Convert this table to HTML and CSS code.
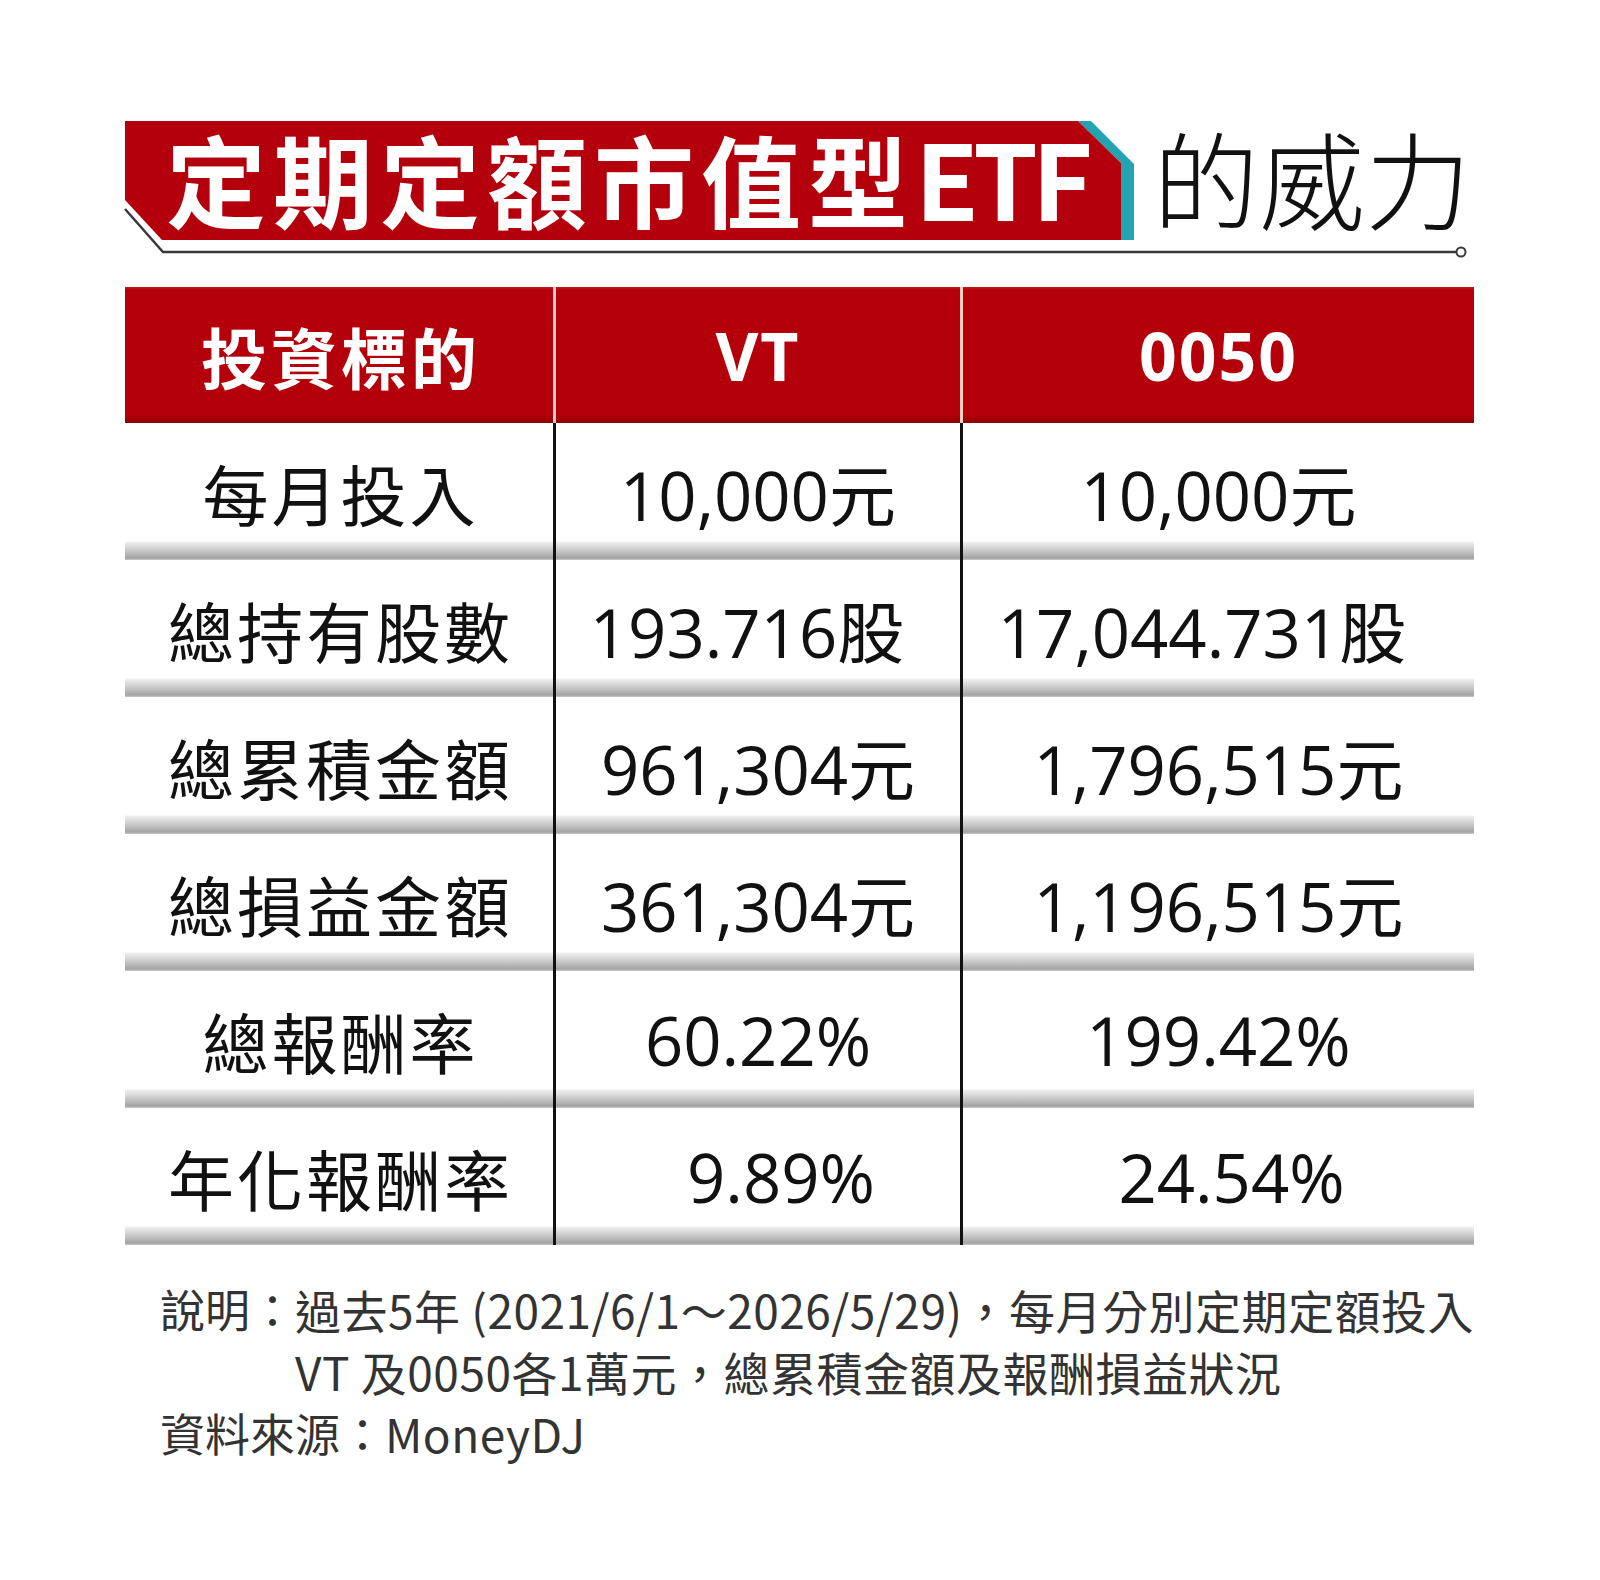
FILE: index.html
```html
<!DOCTYPE html>
<html lang="zh-Hant">
<head>
<meta charset="utf-8">
<title>定期定額市值型ETF的威力</title>
<link rel="stylesheet" href="styles.css">
</head>
<body>
<div class="page">
  <header class="title">
    <svg class="title-deco" width="1600" height="160" viewBox="0 0 1600 160" aria-hidden="true">
      <polygon points="1078,21 1091,21 1134,64 1134,140 1121,140 1121,63" fill="#24a3b3"/>
      <polygon points="125,21 1078,21 1121,63 1121,140 162,140 125,100" fill="#b3000c"/>
      <polyline points="125,109 163,152 1456,152" fill="none" stroke="#3a3a3a" stroke-width="2.5"/>
      <circle cx="1461" cy="152" r="4.5" fill="#fff" stroke="#3a3a3a" stroke-width="2"/>
    </svg>
    <div class="title-row">
      <h1 class="title-main">定期定額市值型<span class="title-latin">ETF</span></h1>
      <span class="title-sub">的威力</span>
    </div>
  </header>

  <div class="table">
    <div class="th th-label">投資標的</div>
    <div class="th th-num">VT</div>
    <div class="th th-num">0050</div>

    <div class="td td-label">每月投入</div>
    <div class="td td-val">10,000元</div>
    <div class="td td-val">10,000元</div>

    <div class="td td-label">總持有股數</div>
    <div class="td td-val nudge-l1">193.716股</div>
    <div class="td td-val nudge-l2">17,044.731股</div>

    <div class="td td-label">總累積金額</div>
    <div class="td td-val">961,304元</div>
    <div class="td td-val">1,796,515元</div>

    <div class="td td-label">總損益金額</div>
    <div class="td td-val">361,304元</div>
    <div class="td td-val">1,196,515元</div>

    <div class="td td-label">總報酬率</div>
    <div class="td td-val">60.22%</div>
    <div class="td td-val">199.42%</div>

    <div class="td td-label">年化報酬率</div>
    <div class="td td-val nudge-r1">9.89%</div>
    <div class="td td-val nudge-r2">24.54%</div>
  </div>

  <div class="note">
    <div class="note-row">
      <span class="note-key">說明：</span>
      <span class="note-text">過去5年 (2021/6/1～2026/5/29)，每月分別定期定額投入<br>VT 及0050各1萬元，總累積金額及報酬損益狀況</span>
    </div>
    <div class="note-row">
      <span class="note-key">資料來源：</span>
      <span class="note-text">MoneyDJ</span>
    </div>
  </div>
</div>
</body>
</html>
```

FILE: styles.css
```css
html, body {
  margin: 0;
  padding: 0;
  background: #fff;
}

.page {
  width: 1600px;
  height: 1580px;
  padding-top: 100px;
  box-sizing: border-box;
  background: #fff;
  font-family: "Noto Sans CJK TC", "Noto Sans CJK SC", sans-serif;
}

/* ---------- title ---------- */
.title {
  position: relative;
  height: 160px;
}

.title-deco {
  position: absolute;
  left: 0;
  top: 0;
  display: block;
}

.title-row {
  position: relative;
  display: flex;
  align-items: center;
  height: 119px;
  padding-top: 16px;
}

.title-main {
  margin: 0 0 0 166px;
  width: 987px;
  font-family: "Noto Sans CJK TC", sans-serif;
  font-weight: 700;
  font-size: 100px;
  line-height: 1;
  letter-spacing: 7px;
  color: #fff;
  white-space: nowrap;
}

.title-latin {
  font-size: 104px;
  letter-spacing: -6px;
}

.title-sub {
  font-family: "Noto Sans CJK TC", sans-serif;
  font-weight: 300;
  font-size: 106px;
  line-height: 1;
  color: #111;
}

/* ---------- table ---------- */
.table {
  display: grid;
  grid-template-columns: 428px 407px 514px;
  margin: 27px 0 0 125px;
  width: 1349px;
}

.th {
  height: 136px;
  box-sizing: border-box;
  display: flex;
  align-items: center;
  justify-content: center;
  color: #fff;
  font-weight: 700;
  background: linear-gradient(to bottom, #c21a1a 0, #b5000b 3px, #b3000a 128px, #8c0007 136px);
}

.th-label {
  font-family: "Noto Sans CJK TC", sans-serif;
  font-size: 66px;
  letter-spacing: 4px;
  padding-left: 4px;
}

.th-num {
  font-family: "Open Sans", "Noto Sans CJK TC", sans-serif;
  font-size: 66px;
  letter-spacing: 2px;
  border-left: 3px solid #f3cfc3;
}

.td {
  height: 137px;
  box-sizing: border-box;
  display: flex;
  align-items: center;
  justify-content: center;
  color: #111;
  background: linear-gradient(to bottom, #fff 0, #fff 118px, #f0f0f0 119px, #bdbdbd 130px, #a3a3a3 135px, #c9c9c9 137px);
}

.td-label {
  font-family: "Noto Sans CJK TC", sans-serif;
  font-size: 66px;
  letter-spacing: 3px;
  padding-left: 3px;
}

.td-val {
  font-family: "Open Sans", "Noto Sans CJK TC", sans-serif;
  font-size: 67px;
  border-left: 3px solid #111;
}

.nudge-l1 {
  padding-right: 22px;
}

.nudge-l2 {
  padding-right: 33px;
}

.nudge-r1 {
  padding-left: 46px;
}

.nudge-r2 {
  padding-left: 26px;
}

/* ---------- note ---------- */
.note {
  margin: 33px 0 0 160px;
  font-family: "Noto Sans CJK TC", sans-serif;
  font-size: 45px;
  line-height: 62px;
  color: #333;
}

.note-row {
  display: flex;
}

.note-key {
  flex: none;
}

.note-text {
  font-size: 46px;
  letter-spacing: 0.5px;
}
```
